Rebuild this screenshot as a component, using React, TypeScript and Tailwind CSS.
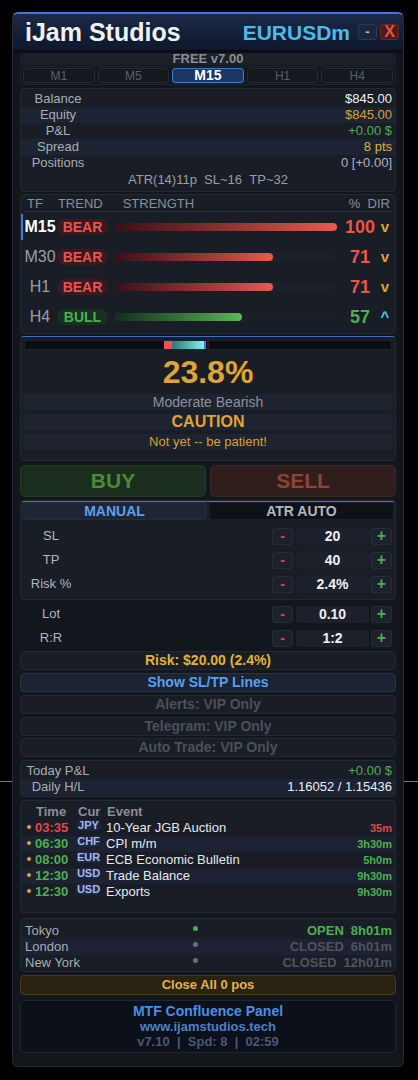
import React from "react";

const box = "rounded-[4px] border border-[#232833] bg-[#191d26]";

function AccRow({ label, value, cls, alt }: { label: string; value: string; cls: string; alt?: boolean }) {
  return (
    <div className={`flex h-[16px] items-center text-[13px] ${alt ? "bg-[#1c2332]" : ""}`}>
      <div className="w-[74px] text-center text-[#a9adb5]">{label}</div>
      <div className={`flex-1 pr-[3px] text-right ${cls}`}>{value}</div>
    </div>
  );
}

type TRow = { tf: string; active?: boolean; trend: "BEAR" | "BULL"; pct: number };

function TrendRow({ r }: { r: TRow }) {
  const bear = r.trend === "BEAR";
  return (
    <div className="flex h-[30px] items-center">
      <div className={`h-[26px] w-[2px] ${r.active ? "bg-[#3a7ae0]" : ""}`} />
      <div className={`w-[34px] text-center text-[16px] ${r.active ? "font-bold text-white" : "text-[#9a9ea6]"}`}>{r.tf}</div>
      <div
        className={`flex h-[16px] w-[51px] items-center justify-center rounded-full text-[14px] font-bold ${
          bear ? "bg-[#3a1a20] text-[#e8554a]" : "bg-[#173022] text-[#4cb050]"
        }`}
      >
        {r.trend}
      </div>
      <div className="relative ml-[7px] h-[8px] w-[220px] rounded-r-[4px] bg-[#1c2029]">
        <div
          className={`absolute left-0 top-0 h-full rounded-r-[4px] ${
            bear ? "bg-gradient-to-r from-[#3a1018] to-[#ea5a4d]" : "bg-gradient-to-r from-[#14301a] to-[#5cba58]"
          }`}
          style={{ width: `${r.pct * 2.22}px` }}
        />
      </div>
      <div className={`ml-[5px] w-[40px] text-center text-[18px] font-bold ${bear ? "text-[#e8554a]" : "text-[#4cb050]"}`}>{r.pct}</div>
      <div className={`w-[10px] text-center text-[15px] font-bold ${bear ? "text-[#d9a52e]" : "text-[#4fc3f7]"}`}>{bear ? "v" : "^"}</div>
    </div>
  );
}

function Stepper({ value }: { value: string }) {
  return (
    <div className="flex items-center">
      <div className="flex h-[17px] w-[21px] items-center justify-center rounded-[3px] border border-[#262c38] bg-[#1c212c] text-[14px] font-bold text-[#e04848]">-</div>
      <div className="ml-[3px] flex h-[17px] w-[73px] items-center justify-center rounded-[3px] bg-[#1c212c] text-[14px] font-bold text-[#eef0f4]">{value}</div>
      <div className="ml-[2px] flex h-[17px] w-[21px] items-center justify-center rounded-[3px] border border-[#262c38] bg-[#1c212c] text-[16px] font-bold text-[#4cb050]">+</div>
    </div>
  );
}

function StepRow({ label, value, lw }: { label: string; value: string; lw: string }) {
  return (
    <div className="flex h-[24px] items-center">
      <div className={`${lw} text-center text-[13px] text-[#b3b7bf]`}>{label}</div>
      <div className="flex-1" />
      <Stepper value={value} />
    </div>
  );
}

const events = [
  { t: "03:35", c: "JPY", e: "10-Year JGB Auction", r: "35m", red: true },
  { t: "06:30", c: "CHF", e: "CPI m/m", r: "3h30m" },
  { t: "08:00", c: "EUR", e: "ECB Economic Bulletin", r: "5h0m" },
  { t: "12:30", c: "USD", e: "Trade Balance", r: "9h30m" },
  { t: "12:30", c: "USD", e: "Exports", r: "9h30m" },
];

const sessions = [
  { n: "Tokyo", open: true, s: "OPEN", d: "8h01m" },
  { n: "London", open: false, s: "CLOSED", d: "6h01m" },
  { n: "New York", open: false, s: "CLOSED", d: "12h01m" },
];

export default function App() {
  const trend: TRow[] = [
    { tf: "M15", active: true, trend: "BEAR", pct: 100 },
    { tf: "M30", trend: "BEAR", pct: 71 },
    { tf: "H1", trend: "BEAR", pct: 71 },
    { tf: "H4", trend: "BULL", pct: 57 },
  ];
  const tabs = ["M1", "M5", "M15", "H1", "H4"];
  return (
    <div className="relative h-[1080px] w-[418px] overflow-hidden bg-black pl-[12px] pt-[12px] font-['Liberation_Sans',Arial,sans-serif]">
      <div className="absolute left-0 top-[781px] h-px w-full bg-[#7a7a7a]" />
      <div className="relative z-10 flex h-[1055px] w-[392px] flex-col overflow-hidden rounded-[6px] border border-[#262b35] border-t-2 border-t-[#3a7ae0] bg-[#12161d]">
        {/* header */}
        <div className="flex h-[36px] shrink-0 items-center bg-gradient-to-b from-[#1c2947] to-[#0e182d] pl-[12px] pr-[4px] shadow-[0_2px_3px_rgba(0,0,0,0.6)]">
          <div className="text-[25px] font-bold leading-none text-[#eef1f6]">iJam Studios</div>
          <div className="flex-1" />
          <div className="text-[21px] font-bold leading-none text-[#4dbbe8]">EURUSDm</div>
          <div className="ml-[8px] flex h-[16px] w-[19px] items-center justify-center rounded-[3px] border border-[#2c3858] bg-[#1b2540] text-[13px] font-bold text-[#c0c8d8]">-</div>
          <div className="ml-[3px] flex h-[16px] w-[19px] items-center justify-center rounded-[3px] border border-[#6a2828] bg-[#4a1c1e] text-[16px] font-bold text-[#e5533f]">X</div>
        </div>

        <div className="flex flex-col px-[7px]">
          {/* free */}
          <div className="mt-[3px] flex h-[12px] items-center justify-center rounded-[3px] bg-[#1c2028] text-[13px] font-bold text-[#8a8e96]">FREE v7.00</div>
          {/* tf tabs */}
          <div className="mt-[1px] flex h-[19px] items-center gap-[3px] rounded-[3px] border border-[#20252e] bg-[#12161d] px-[2px]">
            {tabs.map((t) => (
              <div
                key={t}
                className={`flex h-[15px] flex-1 items-center justify-center rounded-[3px] border ${
                  t === "M15" ? "border-[#3d7bd6] bg-[#1c3766] text-[14px] font-bold text-white" : "border-[#262b35] bg-[#14181f] text-[12px] text-[#5b606a]"
                }`}
              >
                {t}
              </div>
            ))}
          </div>
          {/* account */}
          <div className={`mt-[3px] h-[104px] pt-[2px] ${box}`}>
            <AccRow label="Balance" value="$845.00" cls="text-[#eef0f4]" />
            <AccRow label="Equity" value="$845.00" cls="text-[#d9a030]" alt />
            <AccRow label="P&L" value="+0.00 $" cls="text-[#4cb050]" />
            <AccRow label="Spread" value="8 pts" cls="text-[#e3b232]" alt />
            <AccRow label="Positions" value="0 [+0.00]" cls="text-[#b0b3ba]" />
            <div className="flex h-[18px] items-center justify-center text-[13px] text-[#9a9ea6]">ATR(14)11p&nbsp;&nbsp;SL~16&nbsp;&nbsp;TP~32</div>
          </div>
          {/* trend */}
          <div className={`mt-[2px] h-[140px] pt-[2px] ${box}`}>
            <div className="mx-[3px] flex h-[15px] items-center border-b border-[#2a303a] text-[13px] text-[#8a8f98]">
              <span className="ml-[3px]">TF</span>
              <span className="ml-[15px]">TREND</span>
              <span className="ml-[20px]">STRENGTH</span>
              <span className="flex-1" />
              <span className="mr-[2px]">%&nbsp;&nbsp;DIR</span>
            </div>
            {trend.map((r) => (
              <TrendRow key={r.tf} r={r} />
            ))}
          </div>
          {/* gauge */}
          <div className={`mt-[2px] flex h-[125px] flex-col !border-t-[#3b6fc0] ${box}`}>
            <div className="relative mx-[3px] mt-[3px] h-[10px] border border-[#1a202c] bg-[#0a0d14]">
              <div className="absolute left-[139px] top-0 h-full w-[8px] bg-[#e8554a]" />
              <div className="absolute left-[147px] top-0 h-full w-[32px] bg-gradient-to-r from-[#2a7a78] to-[#80f2f2]" />
              <div className="absolute left-[179px] top-0 h-full w-[2px] bg-[#3a7ae0]" />
              <div className="absolute left-[182px] top-0 h-full w-[2px] bg-[#4a1020]" />
            </div>
            <div className="mt-[2px] flex h-[40px] items-center justify-center text-[32px] font-bold text-[#e0a433]">23.8%</div>
            <div className="mx-[2px] mt-[2px] flex h-[16px] items-center justify-center rounded-[4px] bg-[#1e2330] text-[14px] text-[#8d929c]">Moderate Bearish</div>
            <div className="mx-[2px] mt-[4px] flex h-[16px] items-center justify-center rounded-[4px] bg-[#1e2330] text-[16px] font-bold text-[#e0a433]">CAUTION</div>
            <div className="mx-[2px] mt-[4px] flex h-[16px] items-center justify-center rounded-[4px] bg-[#1e2330] text-[13px] text-[#d9a030]">Not yet -- be patient!</div>
          </div>
          {/* buy sell */}
          <div className="mt-[4px] flex h-[32px] gap-[4px]">
            <div className="flex flex-1 items-center justify-center rounded-[5px] border border-[#263a26] bg-[#1b2d1c] text-[21px] font-bold text-[#4a8a3a]">BUY</div>
            <div className="flex flex-1 items-center justify-center rounded-[5px] border border-[#3e2622] bg-[#2f1e1c] text-[21px] font-bold text-[#8e4338]">SELL</div>
          </div>
          {/* manual box */}
          <div className={`mt-[3px] h-[100px] ${box}`}>
            <div className="mx-[1px] h-px bg-[#3a6fc8]" />
            <div className="flex h-[18px] gap-[2px] px-[1px]">
              <div className="flex flex-1 items-center justify-center rounded-[3px] border border-[#262d3a] bg-[#1e2636] text-[14px] font-bold text-[#5aa0f0]">MANUAL</div>
              <div className="flex flex-1 items-center justify-center rounded-[3px] border border-[#1c2029] bg-[#0e1218] text-[14px] font-bold text-[#b3b6bc]">ATR AUTO</div>
            </div>
            <div className="mt-[4px] pr-[3px]">
              <StepRow label="SL" value="20" lw="w-[60px]" />
              <StepRow label="TP" value="40" lw="w-[60px]" />
              <StepRow label="Risk %" value="2.4%" lw="w-[60px]" />
            </div>
          </div>
          {/* lot rr */}
          <div className="mt-[2px] pr-[4px]">
            <StepRow label="Lot" value="0.10" lw="w-[62px]" />
            <StepRow label="R:R" value="1:2" lw="w-[62px]" />
          </div>
          <div className={`mt-[1px] flex h-[19px] items-center justify-center text-[14px] font-bold text-[#e3b232] ${box}`}>Risk: $20.00 (2.4%)</div>
          <div className="mt-[3px] flex h-[19px] items-center justify-center rounded-[4px] border border-[#2a3244] bg-[#1c2333] text-[14px] font-bold text-[#5aa0f0]">Show SL/TP Lines</div>
          <div className={`mt-[3px] flex h-[19px] items-center justify-center text-[14px] font-bold text-[#4a505a] ${box}`}>Alerts: VIP Only</div>
          <div className={`mt-[3px] flex h-[19px] items-center justify-center text-[14px] font-bold text-[#4a505a] ${box}`}>Telegram: VIP Only</div>
          <div className={`mt-[2px] flex h-[19px] items-center justify-center text-[14px] font-bold text-[#4a505a] ${box}`}>Auto Trade: VIP Only</div>
          {/* today */}
          <div className={`mt-[3px] h-[37px] pt-[2px] ${box}`}>
            <AccRow label="Today P&L" value="+0.00 $" cls="text-[#4cb050]" />
            <AccRow label="Daily H/L" value="1.16052 / 1.15436" cls="text-[#eef0f4]" alt />
          </div>
          {/* events */}
          <div className={`mt-[3px] h-[113px] pt-[3px] ${box}`}>
            <div className="flex h-[16px] items-center text-[13px] font-bold text-[#8a8f99]">
              <span className="ml-[15px] w-[41px]">Time</span>
              <span className="ml-[1px] w-[29px]">Cur</span>
              <span>Event</span>
            </div>
            {events.map((ev, i) => (
              <div key={i} className={`flex h-[16px] items-center ${i % 2 === 1 ? "bg-[#1c2231]" : ""}`}>
                <div className="ml-[6px] mb-[3px] h-[4px] w-[4px] rounded-full bg-[#e0a433]" />
                <div className={`ml-[4px] w-[41px] text-[13px] font-bold ${ev.red ? "text-[#e04848]" : "text-[#4cb050]"}`}>{ev.t}</div>
                <div className="mb-[5px] flex h-[11px] w-[25px] items-center justify-center rounded-full bg-[#1c2744] text-[11px] font-bold text-[#a8b8e8]">{ev.c}</div>
                <div className="ml-[5px] flex-1 text-[13px] text-[#e6e8ec]">{ev.e}</div>
                <div className={`pr-[3px] text-[11px] font-bold ${ev.red ? "text-[#e04848]" : "text-[#4cb050]"}`}>{ev.r}</div>
              </div>
            ))}
          </div>
          {/* sessions */}
          <div className={`mt-[5px] h-[54px] pt-[4px] ${box}`}>
            {sessions.map((s, i) => (
              <div key={s.n} className={`flex h-[16px] items-center ${i === 1 ? "bg-[#1c2231]" : ""}`}>
                <div className="w-[172px] pl-[4px] text-[13px] text-[#a8acb4]">{s.n}</div>
                <div className={`mb-[5px] h-[5px] w-[5px] rounded-full ${s.open ? "bg-[#4cb050]" : "bg-[#6a6e76]"}`} />
                <div className={`flex flex-1 justify-end gap-[7px] pr-[3px] text-[13px] font-bold ${s.open ? "text-[#4cb050]" : "text-[#4e545e]"}`}>
                  <span>{s.s}</span>
                  <span>{s.d}</span>
                </div>
              </div>
            ))}
          </div>
          <div className="mt-[3px] flex h-[20px] items-center justify-center rounded-[4px] border border-[#4a3a18] bg-[#2a2311] text-[13px] font-bold text-[#e3b540]">Close All 0 pos</div>
          {/* footer */}
          <div className="mt-[5px] flex h-[53px] flex-col items-center rounded-[4px] border border-[#1e2533] bg-[#0c1019] pt-[3px] font-bold">
            <div className="h-[15px] text-[14px] leading-[15px] text-[#4a8ee8]">MTF Confluence Panel</div>
            <div className="h-[15px] text-[13px] leading-[15px] text-[#4a80c8]">www.ijamstudios.tech</div>
            <div className="h-[15px] text-[13px] leading-[15px] text-[#4a5878]">v7.10&nbsp; |&nbsp; Spd: 8&nbsp; |&nbsp; 02:59</div>
          </div>
        </div>
      </div>
    </div>
  );
}
